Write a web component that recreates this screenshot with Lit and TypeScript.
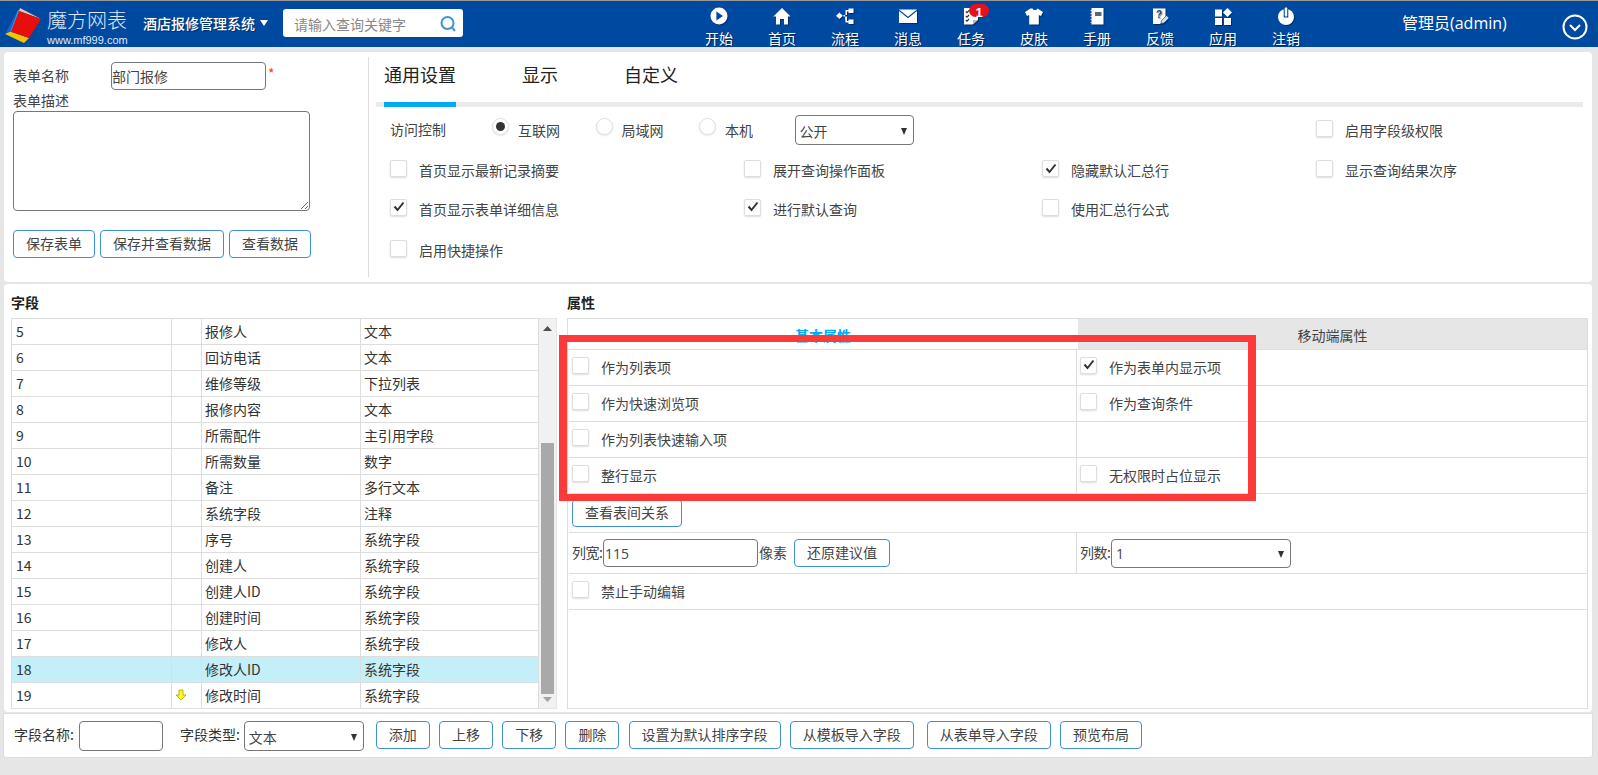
import { LitElement, html, css, svg } from "lit";
import { customElement } from "lit/decorators.js";

const W = "#fff";
const B = "#0049a0";
const navIcons: Record<string, unknown> = {
  开始: svg`<circle cx="10" cy="9" r="8.500" fill="${W}"/><path d="M7.400 4.500 14 9l-6.600 4.500z" fill="${B}"/>`,
  首页: svg`<path d="M10 1 18.600 9.400H16V17.500h-4V12H8v5.500H4V9.400H1.400z" fill="${W}"/>`,
  流程: svg`<path d="M1 8.800l3.400-3.200 3.400 3.200-3.400 3.200z" fill="${W}"/><path d="M8.500 8h2V3h3V1.500h5V6h-5V4.500h-1.500V8H10v1.500h-1.500zM10 9.500h2V14h1.500v-1.500h5V17h-5v-1.500h-3z" fill="${W}"/>`,
  消息: svg`<path d="M1 2.500h18v13.500H1z" fill="${W}"/><path d="M1 3.300 10 10.400 19 3.300" fill="none" stroke="${B}" stroke-width="1.200"/>`,
  任务: svg`<path d="M3 1h14v11.500L11.500 17.500H3z" fill="${W}"/><path d="M4.800 4.500l1.200 1.200 2-2.200M4.800 9l1.200 1.200 2-2.200M4.800 13l1.200 1.200 2-2.200" fill="none" stroke="#334" stroke-width="1.200"/><path d="M12 17.500v-4.500h5z" fill="#bbb"/>`,
  皮肤: svg`<path d="M6.500 1.500 1 5l2 4 2.200-1v9.500h9.600V8l2.200 1 2-4-5.500-3.500c-.8 2-4.200 2-5 0z" fill="${W}"/>`,
  手册: svg`<path d="M4.500 1h12v16.500h-12z" fill="${W}"/><path d="M3.500 3.500h2M3.500 6.500h2M3.500 9.500h2M3.500 12.500h2M3.500 15.500h2" stroke="#cde" stroke-width="1"/><path d="M8 5h6.500v4H8z" fill="#567"/>`,
  反馈: svg`<path d="M3 1.500h12.500V12L10 17H3z" fill="${W}"/><text x="6" y="11" font-size="10" font-family="Liberation Sans" font-weight="700" fill="#345">?</text><path d="M11 16.500l.5-3 5-5 2.500 2.500-5 5z" fill="#cde" stroke="${B}" stroke-width=".6"/>`,
  应用: svg`<path d="M2 2.500h7v7H2zM2 11h7v7H2zM11 11h7v7h-7z" fill="${W}"/><path d="M14.500 1 19 5.500 14.500 10 10 5.500z" fill="${W}"/>`,
  注销: svg`<circle cx="10" cy="10" r="8" fill="${W}"/><rect x="7.700" y="0" width="4.600" height="10.500" fill="${B}"/><rect x="8.800" y="0.500" width="2.400" height="9" rx=".8" fill="${W}"/>`,
};
const nav = ["开始", "首页", "流程", "消息", "任务", "皮肤", "手册", "反馈", "应用", "注销"];

const fields: [string, string, string][] = [
  ["5", "报修人", "文本"],
  ["6", "回访电话", "文本"],
  ["7", "维修等级", "下拉列表"],
  ["8", "报修内容", "文本"],
  ["9", "所需配件", "主引用字段"],
  ["10", "所需数量", "数字"],
  ["11", "备注", "多行文本"],
  ["12", "系统字段", "注释"],
  ["13", "序号", "系统字段"],
  ["14", "创建人", "系统字段"],
  ["15", "创建人ID", "系统字段"],
  ["16", "创建时间", "系统字段"],
  ["17", "修改人", "系统字段"],
  ["18", "修改人ID", "系统字段"],
  ["19", "修改时间", "系统字段"],
];

const cb = (label: string, checked = false) => html`<div class="opt">
  <span class="box">${checked
    ? html`<svg width="14" height="14" viewBox="0 0 14 14"><path d="M2.500 6.500 5.500 10 11.500 2.500" fill="none" stroke="#333" stroke-width="2"/></svg>`
    : ""}</span><span>${label}</span>
</div>`;

const radio = (label: string, on = false) => html`<div class="radio-opt">
  <span class="radio ${on ? "on" : ""}"></span><span>${label}</span>
</div>`;

const caret = html`<svg class="caret" width="6" height="7" viewBox="0 0 6 7"><path d="M0 0h6L3 7z" fill="#333"/></svg>`;

@customElement("app-root")
export class AppRoot extends LitElement {
  static styles = css`
    :host {
      display: block;
      width: 1598px;
      height: 775px;
      overflow: hidden;
      background: #e6e6e6;
      color: #444;
      font: 14px/20px "Noto Sans CJK SC", "Noto Sans", sans-serif;
      position: relative;
    }
    * { box-sizing: border-box; }
    header {
      height: 47px;
      border-top: 1px solid #999;
      background: #0049a0;
      display: flex;
      align-items: flex-start;
      color: #fff;
    }
    .brand { width: 143px; height: 46px; padding-left: 4px; display: flex; }
    .logo { margin-top: 6px; }
    .brand-text { margin-left: 5px; width: 84px; color: #dfe8f4; }
    .brand-name { font-size: 20px; line-height: 28px; margin-top: 5px; font-weight: 300; white-space: nowrap; }
    .brand-url { font: 11px/12px "Liberation Sans", sans-serif; white-space: nowrap; }
    .sys {
      width: 140px;
      height: 46px;
      display: flex;
      align-items: center;
      gap: 5px;
      font-size: 14px;
      font-weight: 500;
      white-space: nowrap;
      padding-bottom: 3px;
      text-shadow: 1px 1px 1px rgba(0,0,0,.4);
    }
    .search {
      width: 180px;
      height: 28px;
      margin-top: 8px;
      background: #fff;
      border-radius: 3px;
      color: #888;
      display: flex;
      align-items: center;
      justify-content: space-between;
      padding: 2px 6px 0 11px;
    }
    nav { display: flex; margin-left: 224.5px; }
    .item {
      width: 63px;
      height: 46px;
      padding-top: 6px;
      display: flex;
      flex-direction: column;
      align-items: center;
      position: relative;
      text-shadow: 1px 1px 1px rgba(0,0,0,.5);
    }
    .item svg { display: block; filter: drop-shadow(1px 1px 0 rgba(0,0,0,.35)); }
    .item span { line-height: 18px; margin-top: 2px; }
    .badge {
      position: absolute;
      left: 29.5px;
      top: 3px;
      width: 20px;
      height: 13px;
      margin: 0 !important;
      border-radius: 7px;
      background: #e8101c;
      text-align: center;
      font: 700 13px/13px "Liberation Sans", sans-serif;
      text-shadow: none;
    }
    .admin { margin-left: 84.5px; width: 160px; font: 16px/22px "Open Sans", "Noto Sans CJK SC", sans-serif; margin-top: 11px; white-space: nowrap; }
    .chev { margin-top: 13px; }

    .panel { width: 1588px; margin-left: 4px; background: #fff; border-radius: 4px; }
    .top { margin-top: 5px; height: 230px; display: flex; }
    .form {
      width: 365px;
      height: 220px;
      margin-top: 5px;
      padding: 5px 0 0 9px;
      border-right: 1px solid #ddd;
    }
    .name-row { display: flex; height: 28px; }
    .name-row label { width: 98px; line-height: 26px; }
    input, textarea {
      display: block;
      font: inherit;
      color: #444;
      border: 1px solid #777;
      border-radius: 4px;
      background: #fff;
      margin: 0;
      outline: none;
    }
    .name { width: 155px; height: 28px; padding: 0; }
    .star { color: #f33; margin-left: 2px; line-height: 22px; }
    .desc-label { height: 21px; line-height: 20px; }
    textarea { width: 297px; height: 100px; }
    .btns { display: flex; gap: 5px; margin-top: 19px; }
    .btn {
      height: 28px;
      padding: 0 12px;
      border: 1px solid #3f8fdc;
      border-radius: 4px;
      background: #fff;
      color: #444;
      line-height: 25px;
      white-space: nowrap;
    }
    .settings { margin-left: 7px; width: 1207px; }
    .tabs {
      height: 55px;
      display: flex;
      gap: 66px;
      padding-left: 8px;
      border-bottom: 5px solid #ebebeb;
      font-size: 18px;
      line-height: 45px;
      color: #222;
    }
    .tabs div { height: 55px; }
    .tabs .active { border-bottom: 5px solid #00a9f4; }
    .opts {
      display: grid;
      margin-top: -1px;
      padding-left: 14px;
      grid-template-columns: 354px 298px 274px 1fr;
      grid-template-rows: 48px 32px 45px 38px;
      align-items: center;
    }
    .opt { display: flex; align-items: center; gap: 12px; white-space: nowrap; }
    .box {
      width: 17px;
      height: 17px;
      flex: none;
      margin-top: -3px;
      background: #fff;
      border: 1px solid #dedede;
      border-radius: 2px;
      box-shadow: 0 1px 2px rgba(0,0,0,.14);
      display: flex;
      align-items: center;
      justify-content: center;
    }
    .access { grid-column: 1 / span 3; display: flex; align-items: center; }
    .access-label { width: 102px; margin-top: -3px; }
    .radio-opt { width: 103.500px; display: flex; align-items: center; gap: 9px; }
    .radio {
      width: 17px;
      height: 17px;
      border-radius: 50%;
      border: 1px solid #e0e0e0;
      background: #fff;
      box-shadow: 0 1px 2px rgba(0,0,0,.1);
      display: flex;
      align-items: center;
      justify-content: center;
      margin-top: -8px;
    }
    .radio.on::after { content: ""; width: 9px; height: 9px; border-radius: 50%; background: #333; }
    .select {
      border: 1px solid #777;
      border-radius: 4px;
      background: #fff;
      display: flex;
      align-items: center;
      justify-content: space-between;
      padding: 2px 6px 0 4px;
      color: #444;
      flex: none;
    }
    .caret { flex: none; }
    .sel1 { width: 119px; height: 30px; margin-left: -8px; }

    .mid { margin-top: 2px; height: 428px; padding-left: 7px; display: flex; gap: 10px; }
    .fields { width: 546px; }
    .title { height: 34px; line-height: 36px; font-weight: 700; color: #222; }
    .tw { display: flex; height: 391px; }
    table { border-collapse: collapse; table-layout: fixed; width: 527px; height: 391px; color: #333; }
    td { border: 1px solid #ddd; height: 26px; padding: 0 0 2px 3px; line-height: 20px; overflow: hidden; white-space: nowrap; }
    td:first-child { padding-left: 4px; }
    .selrow td { background: #c4eff9; }
    .arrow { display: block; }
    .sb {
      width: 19px;
      height: 391px;
      background: #f1f1f1;
      border: 1px solid #e6e6e6;
      border-left: 0;
      display: flex;
      flex-direction: column;
      align-items: center;
      justify-content: space-between;
      padding: 7px 0 6px;
    }
    .thumb { width: 13px; height: 251px; background: #a9a9a9; margin-top: 108px; }
    .props { width: 1021px; }
    .pbox { height: 391px; border: 1px solid #ddd; }
    .ptabs { display: flex; height: 31px; border-bottom: 1px solid #ddd; text-align: center; line-height: 32px; }
    .ptabs div:first-child { width: 510px; color: #00a9f4; background: #fff; font-weight: 700; }
    .ptabs div:last-child { flex: 1; background: #e6e6e6; color: #444; }
    .prow { display: flex; align-items: stretch; border-bottom: 1px solid #ddd; height: 36px; margin-left: 1px; }
    .prow .c1 { width: 508px; flex: none; padding-left: 3px; display: flex; align-items: center; border-right: 1px solid #ddd; }
    .prow .c2 { flex: 1; padding-left: 3px; display: flex; align-items: center; }
    .prow.full .c1 { border-right: 0; }
    .prow .opt { gap: 12px; margin-top: -2px; }
    .r-rel { height: 39px; }
    .r-w { height: 41px; }
    .w-in { width: 155px; height: 28px; padding: 0 0 0 1px; font-family: "Open Sans", sans-serif; }
    .w-label { width: 31px; flex: none; white-space: nowrap; letter-spacing: -.5px; margin-top: -3px; }
    .px { margin: -3px 7px 0 1px; white-space: nowrap; }
    .sel2 { width: 180px; height: 29px; font-family: "Open Sans", sans-serif; }

    .bar {
      margin-top: 1px;
      height: 45px;
      background: #fff;
      border: 1px solid #ddd;
      border-radius: 0 0 3px 3px;
      padding: 7px 0 0 10px;
      display: flex;
      align-items: flex-start;
      width: 1590px;
      margin-left: 3px;
    }
    .bar .lab { line-height: 27px; color: #333; white-space: nowrap; }
    .n-in { width: 84px; height: 30px; margin: 0 17px 0 5px; }
    .sel3 { width: 120px; height: 30px; margin: 0 12px 0 4px; }
    .bar .btn { margin-right: 9.2px; }
    .bar .far { margin-right: 13px; }

    .mark {
      position: absolute;
      left: 559px;
      top: 335px;
      width: 697px;
      height: 166px;
      border: 7px solid #fc3a3a;
      border-width: 7px 8px;
      pointer-events: none;
    }
  `;

  render() {
    return html`
      <header>
        <div class="brand">
          <svg class="logo" width="38" height="36" viewBox="0 0 38 36">
            <path d="M1 27 6 24.500 25 31 20 36z" fill="#f4c400"/>
            <path d="M1 27 14 3 6 24.500z" fill="#1560d8"/>
            <path d="M6 24.500 14 3 17 4.500 9 25z" fill="#2a9cf0"/>
            <path d="M16 1 37 12 15 4z" fill="#eec2ae"/>
            <path d="M15 4 37 12 25 31 7 24.500z" fill="#e80e0e"/>
          </svg>
          <div class="brand-text">
            <div class="brand-name">魔方网表</div>
            <div class="brand-url">www.mf999.com</div>
          </div>
        </div>
        <div class="sys">酒店报修管理系统
          <svg width="8" height="6" viewBox="0 0 8 6"><path d="M0 0h8L4 6z" fill="#fff"/></svg>
        </div>
        <div class="search">请输入查询关键字
          <svg width="18" height="18" viewBox="0 0 18 18"><circle cx="8.500" cy="8" r="6" fill="none" stroke="#3d94dc" stroke-width="2"/><path d="M13 12.500 16 16" stroke="#3d94dc" stroke-width="2"/></svg>
        </div>
        <nav>
          ${nav.map(
            (n) => html`<div class="item">
              <svg width="20" height="20" viewBox="0 0 20 20">${navIcons[n]}</svg>
              <span>${n}</span>
              ${n === "任务" ? html`<span class="badge">1</span>` : ""}
            </div>`
          )}
        </nav>
        <div class="admin">管理员(admin)</div>
        <svg class="chev" width="26" height="26" viewBox="0 0 26 26"><circle cx="13" cy="13" r="11.500" fill="none" stroke="#fff" stroke-width="2"/><path d="M8 11l5 5 5-5" fill="none" stroke="#fff" stroke-width="2"/></svg>
      </header>

      <section class="panel top">
        <div class="form">
          <div class="name-row">
            <label>表单名称</label>
            <input class="name" .value=${"部门报修"} />
            <span class="star">*</span>
          </div>
          <div class="desc-label">表单描述</div>
          <textarea></textarea>
          <div class="btns">
            <div class="btn">保存表单</div>
            <div class="btn">保存并查看数据</div>
            <div class="btn">查看数据</div>
          </div>
        </div>
        <div class="settings">
          <div class="tabs">
            <div class="active">通用设置</div>
            <div>显示</div>
            <div>自定义</div>
          </div>
          <div class="opts">
            <div class="access">
              <span class="access-label">访问控制</span>
              ${radio("互联网", true)}${radio("局域网")}${radio("本机")}
              <div class="select sel1">公开 ${caret}</div>
            </div>
            ${cb("启用字段级权限")}
            ${cb("首页显示最新记录摘要")}${cb("展开查询操作面板")}${cb("隐藏默认汇总行", true)}${cb("显示查询结果次序")}
            ${cb("首页显示表单详细信息", true)}${cb("进行默认查询", true)}${cb("使用汇总行公式")}<div></div>
            ${cb("启用快捷操作")}
          </div>
        </div>
      </section>

      <section class="panel mid">
        <div class="fields">
          <div class="title">字段</div>
          <div class="tw">
            <table>
              <colgroup><col style="width:160px" /><col style="width:30px" /><col style="width:159px" /><col style="width:178px" /></colgroup>
              ${fields.map(
                (f) => html`<tr class=${f[0] === "18" ? "selrow" : ""}>
                  <td>${f[0]}</td>
                  <td>${f[0] === "19"
                    ? html`<svg class="arrow" width="12" height="12" viewBox="0 0 12 12"><path d="M4 1h4v5h3L6 11 1 6h3z" fill="#ff0" stroke="#a89a20" stroke-width=".8"/></svg>`
                    : ""}</td>
                  <td>${f[1]}</td>
                  <td>${f[2]}</td>
                </tr>`
              )}
            </table>
            <div class="sb">
              <svg width="9" height="5" viewBox="0 0 9 5"><path d="M0 5h9L4.500 0z" fill="#505050"/></svg>
              <div class="thumb"></div>
              <svg width="9" height="5" viewBox="0 0 9 5"><path d="M0 0h9L4.500 5z" fill="#a3a3a3"/></svg>
            </div>
          </div>
        </div>
        <div class="props">
          <div class="title">属性</div>
          <div class="pbox">
            <div class="ptabs"><div>基本属性</div><div>移动端属性</div></div>
            <div class="prow"><div class="c1">${cb("作为列表项")}</div><div class="c2">${cb("作为表单内显示项", true)}</div></div>
            <div class="prow"><div class="c1">${cb("作为快速浏览项")}</div><div class="c2">${cb("作为查询条件")}</div></div>
            <div class="prow"><div class="c1">${cb("作为列表快速输入项")}</div><div class="c2"></div></div>
            <div class="prow"><div class="c1">${cb("整行显示")}</div><div class="c2">${cb("无权限时占位显示")}</div></div>
            <div class="prow full r-rel"><div class="c1"><div class="btn">查看表间关系</div></div></div>
            <div class="prow r-w">
              <div class="c1"><span class="w-label">列宽:</span><input class="w-in" .value=${"115"} /><span class="px">像素</span><div class="btn">还原建议值</div></div>
              <div class="c2"><span class="w-label">列数:</span><div class="select sel2">1 ${caret}</div></div>
            </div>
            <div class="prow full"><div class="c1">${cb("禁止手动编辑")}</div></div>
          </div>
        </div>
      </section>

      <section class="bar">
        <span class="lab">字段名称:</span><input class="n-in" />
        <span class="lab">字段类型:</span><div class="select sel3">文本 ${caret}</div>
        <div class="btn">添加</div>
        <div class="btn">上移</div>
        <div class="btn">下移</div>
        <div class="btn">删除</div>
        <div class="btn">设置为默认排序字段</div>
        <div class="btn far">从模板导入字段</div>
        <div class="btn">从表单导入字段</div>
        <div class="btn">预览布局</div>
      </section>

      <div class="mark"></div>
    `;
  }
}
